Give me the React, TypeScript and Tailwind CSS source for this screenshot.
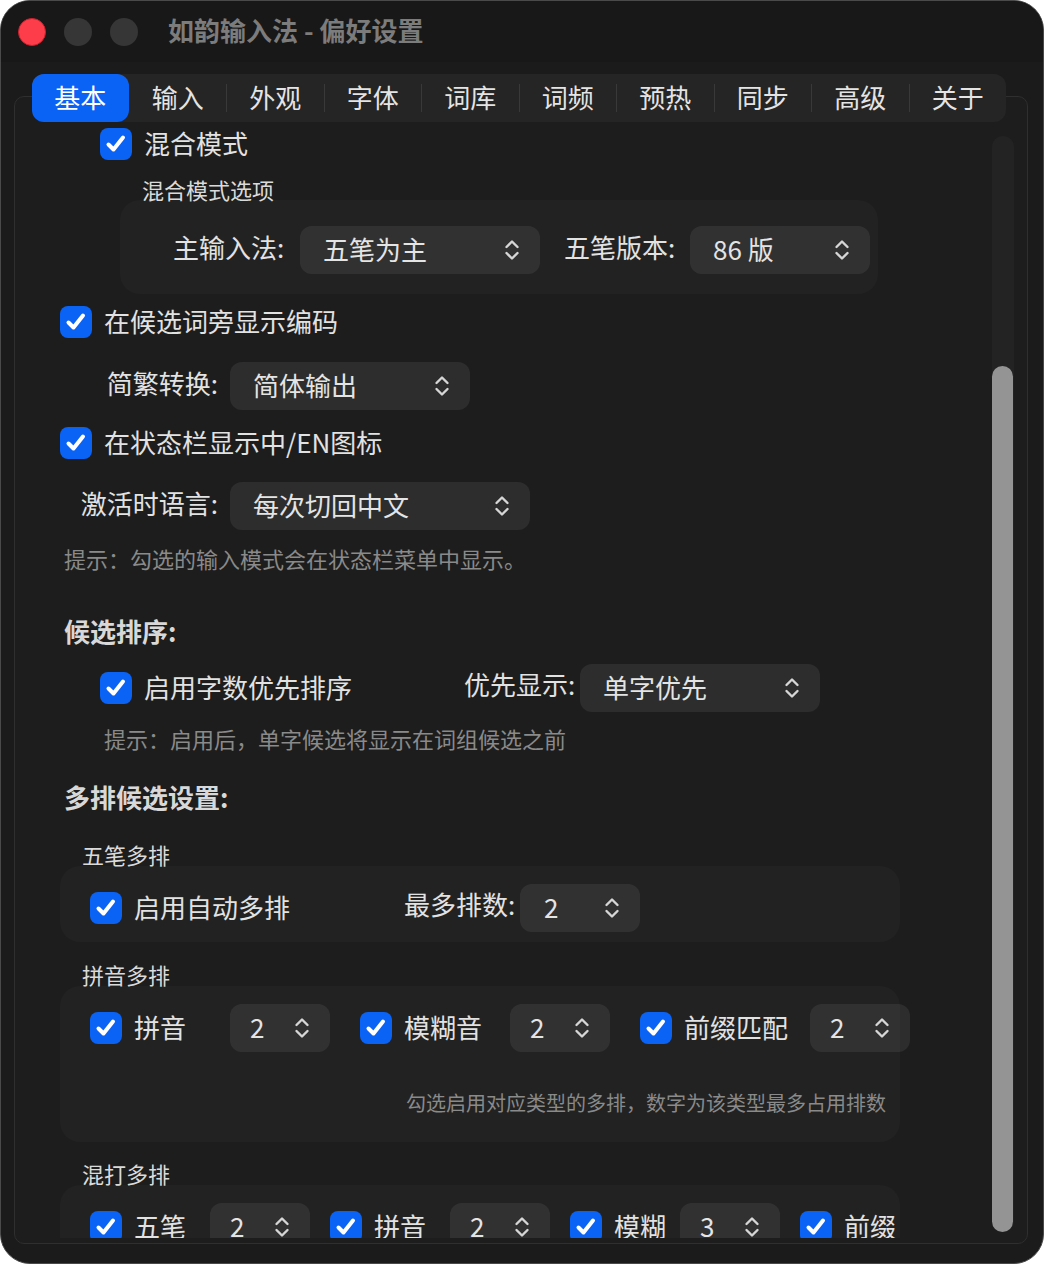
import React from "react";

const tabs = ["基本", "输入", "外观", "字体", "词库", "词频", "预热", "同步", "高级", "关于"];

function Checkbox() {
  return (
    <span className="flex h-[32px] w-[32px] shrink-0 items-center justify-center rounded-[8px] bg-[#0b63f6]">
      <svg width="24" height="24" viewBox="0 0 24 24" fill="none">
        <path d="M4.5 12.5 L9.5 17.5 L19 5.5" stroke="#fff" strokeWidth="4" strokeLinecap="round" strokeLinejoin="round" />
      </svg>
    </span>
  );
}

function Chevrons() {
  return (
    <svg width="18" height="26" viewBox="0 0 18 26" fill="none" className="shrink-0">
      <path d="M3.5 10 L9 4.5 L14.5 10" stroke="#d6d6d6" strokeWidth="2.4" strokeLinecap="round" strokeLinejoin="round" />
      <path d="M3.5 16 L9 21.5 L14.5 16" stroke="#d6d6d6" strokeWidth="2.4" strokeLinecap="round" strokeLinejoin="round" />
    </svg>
  );
}

function Select({ value, className }: { value: string; className: string }) {
  return (
    <div className={"flex h-[48px] shrink-0 items-center justify-between rounded-[12px] bg-white/[0.07] pr-[19px] text-[26px] leading-[30px] text-[#e4e4e4] " + className}>
      <span className="mb-[3px]">{value}</span>
      <Chevrons />
    </div>
  );
}

function CheckRow({ label, className = "" }: { label: string; className?: string }) {
  return (
    <div className={"flex h-[32px] shrink-0 items-center gap-[12px] " + className}>
      <Checkbox />
      <span className="mb-[3px] whitespace-nowrap text-[26px] leading-[32px] text-[#e2e2e2]">{label}</span>
    </div>
  );
}

export default function App() {
  return (
    <div className="h-[1264px] w-[1044px] bg-white font-['Noto_Sans_CJK_SC',sans-serif]">
      <div className="flex h-full w-full flex-col overflow-hidden rounded-[30px] border border-[#4a4a4a] bg-[#1b1b1b]">
        {/* title bar */}
        <div className="flex h-[61px] shrink-0 items-center bg-[#181818] pl-[17px]">
          <span className="h-[28px] w-[28px] rounded-full border border-[#c9222e] bg-[#fe3d4a]" />
          <span className="ml-[18px] h-[28px] w-[28px] rounded-full bg-[#363636]" />
          <span className="ml-[18px] h-[28px] w-[28px] rounded-full bg-[#363636]" />
          <span className="mb-[3px] ml-[30px] text-[26px] font-bold leading-[32px] text-[#7c7c7c]">如韵输入法 - 偏好设置</span>
        </div>

        <div className="flex flex-col pt-[12px]">
          {/* tabs */}
          <div className="relative z-10 ml-[31px] flex h-[48px] w-[974px] items-center rounded-[12px] bg-[#252525]">
            {tabs.map((t, i) =>
              i === 0 ? (
                <div key={t} className="flex h-[48px] flex-1 items-center justify-center rounded-[12px] bg-[#0b63f6] pb-[3px] text-[26px] leading-[30px] text-white">
                  {t}
                </div>
              ) : (
                <div
                  key={t}
                  className={
                    "flex h-[28px] flex-1 items-center justify-center border-l pb-[3px] text-[26px] leading-[30px] text-[#e4e4e4] " +
                    (i === 1 ? "border-transparent" : "border-[#393939]")
                  }
                >
                  {t}
                </div>
              )
            )}
          </div>

          {/* panel */}
          <div className="relative -mt-[26px] ml-[13px] h-[1148px] w-[1014px] rounded-[10px] border border-[#2f2f2f] bg-[#1d1d1d]">
            <div className="h-[1141px] overflow-hidden">
              <div className="flex flex-col pl-[45px]">
                <CheckRow label="混合模式" className="ml-[40px] mt-[31px]" />
                <div className="ml-[82px] mt-[18px] text-[22px] leading-[22px] text-[#dadada]">混合模式选项</div>
                <div className="ml-[60px] flex h-[94px] w-[758px] items-start rounded-[20px] bg-white/[0.025] pl-[53px] pt-[26px]">
                  <div className="flex h-[48px] items-center">
                    <span className="mb-[6px] w-[127px] text-[26px] leading-[30px] text-[#e2e2e2]">主输入法:</span>
                    <Select value="五笔为主" className="w-[240px] pl-[23px]" />
                    <span className="mb-[6px] ml-[24px] w-[126px] text-[26px] leading-[30px] text-[#e2e2e2]">五笔版本:</span>
                    <Select value="86 版" className="w-[180px] pl-[23px]" />
                  </div>
                </div>

                <CheckRow label="在候选词旁显示编码" className="mt-[12px]" />
                <div className="mt-[24px] flex h-[48px] items-center">
                  <span className="mb-[6px] w-[158px] text-right text-[26px] leading-[30px] text-[#e2e2e2]">简繁转换:</span>
                  <Select value="简体输出" className="ml-[12px] w-[240px] pl-[23px]" />
                </div>
                <CheckRow label="在状态栏显示中/EN图标" className="mt-[17px]" />
                <div className="mt-[23px] flex h-[48px] items-center">
                  <span className="mb-[6px] w-[158px] text-right text-[26px] leading-[30px] text-[#e2e2e2]">激活时语言:</span>
                  <Select value="每次切回中文" className="ml-[12px] w-[300px] pl-[23px]" />
                </div>
                <div className="ml-[4px] mt-[13px] text-[22px] leading-[30px] text-[#8a8a8a]">提示：勾选的输入模式会在状态栏菜单中显示。</div>

                <div className="ml-[4px] mt-[41px] text-[26px] font-bold leading-[34px] text-[#d8d8d8]">候选排序:</div>
                <div className="mt-[16px] flex h-[48px] items-center">
                  <CheckRow label="启用字数优先排序" className="ml-[40px] w-[364px]" />
                  <span className="mb-[8px] w-[116px] text-[26px] leading-[30px] text-[#e2e2e2]">优先显示:</span>
                  <Select value="单字优先" className="w-[240px] pl-[23px]" />
                </div>
                <div className="ml-[44px] mt-[11px] text-[22px] leading-[30px] text-[#8a8a8a]">提示：启用后，单字候选将显示在词组候选之前</div>

                <div className="ml-[4px] mt-[27px] text-[26px] font-bold leading-[34px] text-[#d8d8d8]">多排候选设置:</div>

                <div className="ml-[22px] mt-[29px] text-[22px] leading-[22px] text-[#dadada]">五笔多排</div>
                <div className="mt-[1px] flex h-[76px] w-[840px] items-start rounded-[20px] bg-white/[0.025] pl-[30px] pt-[18px]">
                  <div className="flex h-[48px] items-center">
                    <CheckRow label="启用自动多排" className="w-[314px]" />
                    <span className="mb-[8px] w-[116px] text-[26px] leading-[30px] text-[#e2e2e2]">最多排数:</span>
                    <Select value="2" className="w-[120px] pl-[24px]" />
                  </div>
                </div>

                <div className="ml-[22px] mt-[21px] text-[22px] leading-[22px] text-[#dadada]">拼音多排</div>
                <div className="mt-[1px] flex h-[156px] w-[840px] flex-col rounded-[20px] bg-white/[0.025] pl-[30px] pt-[18px]">
                  <div className="flex h-[48px] items-center">
                    <CheckRow label="拼音" className="w-[140px]" />
                    <Select value="2" className="w-[100px] pl-[20px]" />
                    <CheckRow label="模糊音" className="ml-[30px] w-[150px]" />
                    <Select value="2" className="w-[100px] pl-[20px]" />
                    <CheckRow label="前缀匹配" className="ml-[30px] w-[170px]" />
                    <Select value="2" className="w-[100px] pl-[20px]" />
                  </div>
                  <div className="mt-[39px] pr-[14px] text-right text-[20px] leading-[24px] text-[#8a8a8a]">
                    勾选启用对应类型的多排，数字为该类型最多占用排数
                  </div>
                </div>

                <div className="ml-[22px] mt-[20px] text-[22px] leading-[22px] text-[#dadada]">混打多排</div>
                <div className="mt-[1px] flex h-[120px] w-[840px] items-start rounded-[20px] bg-white/[0.025] pl-[30px] pt-[18px]">
                  <div className="flex h-[48px] items-center">
                    <CheckRow label="五笔" className="w-[120px]" />
                    <Select value="2" className="w-[100px] pl-[20px]" />
                    <CheckRow label="拼音" className="ml-[20px] w-[120px]" />
                    <Select value="2" className="w-[100px] pl-[20px]" />
                    <CheckRow label="模糊" className="ml-[20px] w-[110px]" />
                    <Select value="3" className="w-[100px] pl-[20px]" />
                    <CheckRow label="前缀" className="ml-[20px]" />
                  </div>
                </div>
              </div>
            </div>

            {/* scrollbar */}
            <div className="absolute right-[13px] top-[39px] flex h-[1096px] w-[22px] flex-col justify-end rounded-full bg-[#232323]">
              <div className="h-[866px] w-[21px] rounded-full bg-[#949494]" />
            </div>
          </div>
        </div>
      </div>
    </div>
  );
}
